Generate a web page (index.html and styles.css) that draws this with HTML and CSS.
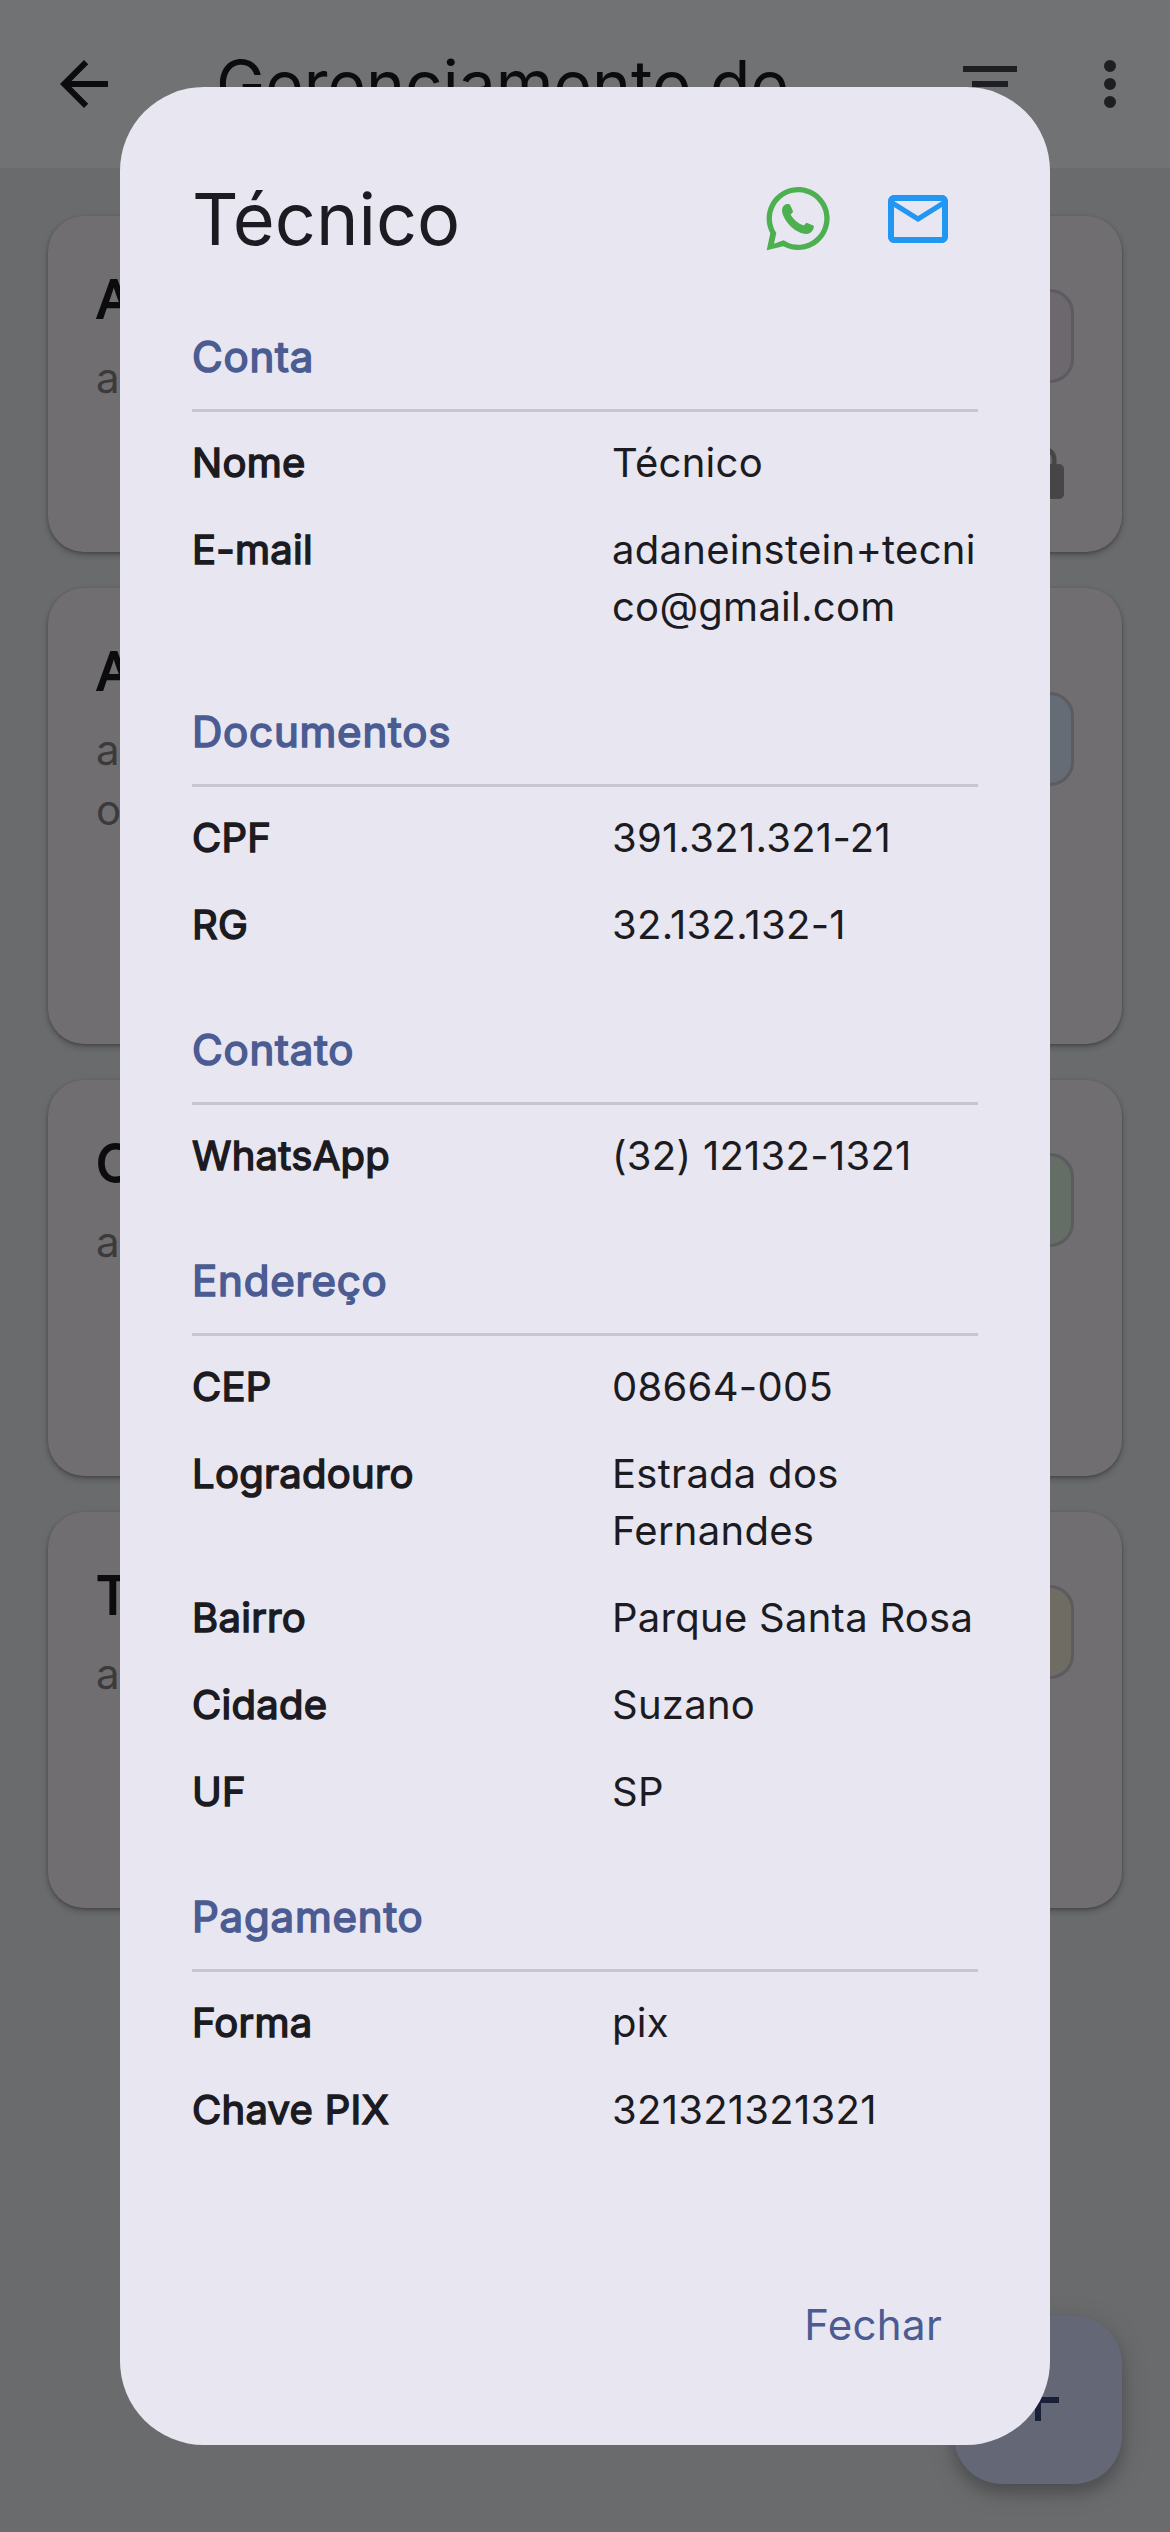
FILE: index.html
```html
<!DOCTYPE html>
<html lang="pt-BR">
<head>
    <meta charset="UTF-8">
    <meta name="viewport" content="width=device-width, initial-scale=1.0">
    <title>Gerenciamento de</title>
    <link rel="stylesheet" href="styles.css">
</head>
<body>

<header class="app-bar">
    <svg class="icon back" viewBox="0 0 24 24"><path d="M20 11H7.83l5.59-5.59L12 4l-8 8 8 8 1.41-1.41L7.83 13H20v-2z"/></svg>
    <h1>Gerenciamento de</h1>
    <svg class="icon" viewBox="0 0 24 24"><path d="M10 18h4v-2h-4v2zM3 6v2h18V6H3zm3 7h12v-2H6v2z"/></svg>
    <svg class="icon" viewBox="0 0 24 24"><path d="M12 8a2 2 0 1 0 0-4 2 2 0 0 0 0 4zm0 2a2 2 0 1 0 0 4 2 2 0 0 0 0-4zm0 6a2 2 0 1 0 0 4 2 2 0 0 0 0-4z"/></svg>
</header>

<main class="user-list">
    <div class="card card-sm">
        <div class="card-text">
            <h2>A</h2>
            <p>a</p>
        </div>
        <div class="card-side">
            <span class="chip chip-pink"></span>
            <svg class="lock" viewBox="0 0 24 24"><path d="M18 8h-1V6c0-2.760-2.240-5-5-5S7 3.240 7 6v2H6c-1.100 0-2 .9-2 2v10c0 1.100.9 2 2 2h12c1.100 0 2-.9 2-2V10c0-1.100-.9-2-2-2zM8.900 8V6a3.100 3.100 0 0 1 6.200 0v2z"/></svg>
        </div>
    </div>
    <div class="card card-lg">
        <div class="card-text">
            <h2>A</h2>
            <p>a<br>o</p>
        </div>
        <div class="card-side">
            <span class="chip chip-blue"></span>
        </div>
    </div>
    <div class="card">
        <div class="card-text">
            <h2>C</h2>
            <p>a</p>
        </div>
        <div class="card-side">
            <span class="chip chip-green"></span>
        </div>
    </div>
    <div class="card">
        <div class="card-text">
            <h2>T</h2>
            <p>a</p>
        </div>
        <div class="card-side">
            <span class="chip chip-yellow"></span>
        </div>
    </div>
</main>

<button class="fab">
    <svg class="icon" viewBox="0 0 24 24"><path d="M19 13h-6v6h-2v-6H5v-2h6V5h2v6h6v2z"/></svg>
</button>

<!-- User details dialog -->
<div class="dialog">
    <div class="dialog-header">
        <h2>Técnico</h2>
        <div class="dialog-icons">
            <svg class="icon whatsapp" viewBox="0 0 72 72">
                <path fill-rule="evenodd" d="M4.700 67.300L8.300 50.300A31.500 31.500 0 1 1 21.300 63.300ZM12 60.700L21.600 57.300A26.200 26.200 0 1 0 14.300 50Z"/>
                <path d="M24 21.300C25.500 20.600 27.500 20.800 28.200 22L31 28.300C31 29.500 29.500 30.700 28.700 31.700C31.500 36.500 36 40.500 41.700 42.500L44.500 39.700L51.300 42.600C52.200 43.500 51.800 45 51.300 46.200C49.500 49.500 47.500 50.500 45 51C41 51 37 49.500 32.700 46.700C27.500 43 23.500 38 21.200 32.500C20 29.500 19.800 27 20.300 25.300C21 23.300 22.500 21.900 24 21.300Z"/>
            </svg>
            <svg class="icon mail" viewBox="0 0 24 24"><path d="M22 6c0-1.100-.9-2-2-2H4c-1.100 0-2 .9-2 2v12c0 1.100.9 2 2 2h16c1.100 0 2-.9 2-2V6zm-2 0l-8 5-8-5h16zm0 12H4V8l8 5 8-5v10z"/></svg>
        </div>
    </div>

    <section>
        <h3>Conta</h3>
        <div class="row"><b>Nome</b><span>Técnico</span></div>
        <div class="row"><b>E-mail</b><span>adaneinstein+tecnico@gmail.com</span></div>
    </section>

    <section>
        <h3>Documentos</h3>
        <div class="row"><b>CPF</b><span>391.321.321-21</span></div>
        <div class="row"><b>RG</b><span>32.132.132-1</span></div>
    </section>

    <section>
        <h3>Contato</h3>
        <div class="row"><b>WhatsApp</b><span>(32) 12132-1321</span></div>
    </section>

    <section>
        <h3>Endereço</h3>
        <div class="row"><b>CEP</b><span>08664-005</span></div>
        <div class="row"><b>Logradouro</b><span>Estrada dos Fernandes</span></div>
        <div class="row"><b>Bairro</b><span>Parque Santa Rosa</span></div>
        <div class="row"><b>Cidade</b><span>Suzano</span></div>
        <div class="row"><b>UF</b><span>SP</span></div>
    </section>

    <section>
        <h3>Pagamento</h3>
        <div class="row"><b>Forma</b><span>pix</span></div>
        <div class="row"><b>Chave PIX</b><span>321321321321</span></div>
    </section>

    <div class="dialog-actions">
        <button class="btn-close">Fechar</button>
    </div>
</div>

</body>
</html>
```
FILE: styles.css
```css
* {
    margin: 0;
    padding: 0;
    box-sizing: border-box;
    font-family: Inter, "Liberation Sans", sans-serif;
    font-optical-sizing: none;
}

body {
    background-color: #6a6b6d;
    height: 2532px;
    overflow: hidden;
}

button {
    border: none;
    background: none;
}

.icon {
    width: 72px;
    height: 72px;
    flex: none;
}

.app-bar {
    display: flex;
    align-items: center;
    gap: 48px;
    height: 168px;
    padding: 0 24px 0 48px;
    background-color: #717274;
    fill: #1f1f23;
}

.app-bar .back {
    fill: #0c0c0e;
    margin-right: 48px;
}

.app-bar h1 {
    flex: 1;
    font-size: 66px;
    font-weight: 400;
    line-height: 84px;
    color: #0c0c0e;
}

/* Cards */
.user-list {
    display: flex;
    flex-direction: column;
    gap: 36px;
    padding: 48px;
}

.card {
    display: flex;
    justify-content: space-between;
    height: 396px;
    padding: 48px;
    border-radius: 36px;
    background-color: #716e72;
    box-shadow: 0 3px 6px rgba(0, 0, 0, 0.25), 0 1px 3px rgba(0, 0, 0, 0.2);
}

.card-sm {
    height: 336px;
}

.card-lg {
    height: 456px;
}

.card-text h2 {
    font-size: 52px;
    font-weight: 400;
    line-height: 72px;
    color: #0c0c0e;
    -webkit-text-stroke: 2px #0c0c0e;
}

.card-text p {
    margin-top: 12px;
    font-size: 42px;
    line-height: 60px;
    color: #3b3b3b;
}

.card-side {
    display: flex;
    flex-direction: column;
    align-items: flex-end;
    padding-top: 25px;
    gap: 61px;
}

.card-lg .card-side {
    padding-top: 56px;
}

.chip {
    width: 200px;
    height: 94px;
    border: 3px solid #5a5c60;
    border-radius: 24px;
}

.chip-pink { background-color: #6d676e; }
.chip-blue { background-color: #666c76; }
.chip-green { background-color: #656d67; }
.chip-yellow { background-color: #6f6c63; }

.lock {
    width: 60px;
    height: 60px;
    fill: #464646;
}

.fab {
    position: fixed;
    right: 48px;
    bottom: 48px;
    width: 168px;
    height: 168px;
    padding: 48px;
    border-radius: 48px;
    background-color: #646776;
    fill: #1a2039;
    box-shadow: 0 9px 15px rgba(0, 0, 0, 0.2), 0 6px 30px rgba(0, 0, 0, 0.14);
}

/* Dialog */
.dialog {
    position: fixed;
    top: 87px;
    left: 120px;
    width: 930px;
    height: 2358px;
    padding: 72px;
    border-radius: 84px;
    background-color: #e8e6f0;
    color: #1b1b21;
    display: flex;
    flex-direction: column;
}

.dialog-header {
    display: flex;
    justify-content: space-between;
    align-items: center;
    height: 120px;
    margin-bottom: 48px;
}

.dialog-header h2 {
    font-size: 72px;
    font-weight: 400;
    line-height: 96px;
}

.dialog-icons {
    display: flex;
    gap: 48px;
    padding-right: 24px;
}

.whatsapp {
    fill: #4caf50;
}

.mail {
    fill: #2196f3;
}

section {
    margin-bottom: 52px;
}

section h3 {
    font-size: 42px;
    font-weight: 400;
    line-height: 60px;
    letter-spacing: 0.8px;
    color: #4b5c92;
    -webkit-text-stroke: 1.6px #4b5c92;
    padding-bottom: 22px;
    border-bottom: 3px solid #c6c5d0;
    margin-bottom: 7px;
}

.row {
    display: flex;
    padding: 15px 0;
    font-size: 40px;
    line-height: 57px;
    letter-spacing: 0.27px;
}

.row b {
    width: 420px;
    font-weight: 400;
    -webkit-text-stroke: 1.5px #1b1b21;
}

.row span {
    flex: 1;
    min-width: 0;
    overflow-wrap: anywhere;
}

.dialog-actions {
    display: flex;
    justify-content: flex-end;
    margin-top: auto;
}

.btn-close {
    height: 96px;
    padding: 0 36px;
    font-size: 42px;
    line-height: 60px;
    letter-spacing: 0.3px;
    color: #4b5c92;
}
```
